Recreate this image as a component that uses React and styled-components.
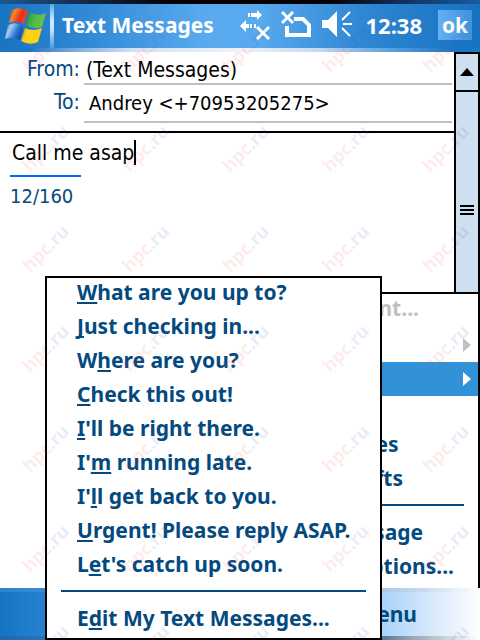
import React, { useState } from 'react';
import styled, { createGlobalStyle } from 'styled-components';

const templates = [
  ['', 'W', 'hat are you up to?'],
  ['', 'J', 'ust checking in...'],
  ['W', 'h', 'ere are you?'],
  ['', 'C', 'heck this out!'],
  ['', 'I', "'ll be right there."],
  ["I'", 'm', ' running late.'],
  ["I'", 'l', 'l get back to you.'],
  ['', 'U', 'rgent! Please reply ASAP.'],
  ['L', 'e', "t's catch up soon."],
];

function Flag() {
  return (
    <FlagSvg viewBox="4 4 44 44" aria-hidden="true">
      <defs>
        <linearGradient id="red" x1="0" y1="0" x2="1" y2="0.4">
          <stop offset="0" stopColor="#b8321c" />
          <stop offset="0.35" stopColor="#f4872c" />
          <stop offset="0.7" stopColor="#e2301a" />
          <stop offset="1" stopColor="#e8492a" />
        </linearGradient>
        <linearGradient id="green" x1="0" y1="0" x2="1" y2="0.3">
          <stop offset="0" stopColor="#1f8a35" />
          <stop offset="0.5" stopColor="#52b848" />
          <stop offset="1" stopColor="#6cc04a" />
        </linearGradient>
        <linearGradient id="blue" x1="0" y1="0" x2="1" y2="0.5">
          <stop offset="0" stopColor="#1c5cb4" />
          <stop offset="0.35" stopColor="#a4cdf6" />
          <stop offset="0.7" stopColor="#2f78d0" />
          <stop offset="1" stopColor="#174c9c" />
        </linearGradient>
        <linearGradient id="yellow" x1="0" y1="0" x2="1" y2="0.3">
          <stop offset="0" stopColor="#c88a12" />
          <stop offset="0.35" stopColor="#fbd21c" />
          <stop offset="1" stopColor="#ffcf10" />
        </linearGradient>
      </defs>
      <path fill="url(#red)" d="M12 10Q20 6 28 11L24 24Q17 20 9 23Z" />
      <path fill="url(#green)" d="M30 12Q37 17 46 13L42 27Q34 30 26 25Z" />
      <path fill="url(#blue)" d="M8 25Q16 21 23 26L20 40Q13 36 5 39Z" />
      <path fill="url(#yellow)" d="M25 28Q33 32 42 28L38 42Q30 46 21 41Z" />
    </FlagSvg>
  );
}

function Connectivity() {
  return (
    <StatusIcon viewBox="0 0 31 30" role="img" aria-label="Connectivity">
      <path d="M8 3h2v4H8zM11 3h6V0l5 5-5 5V7h-6z" />
      <path d="M0 16l6-6v4h3v4H6v4zM10 14h2v4h-2zM14 14h2v4h-2z" />
      <path d="M17 17l12 12M29 17L17 29" stroke="#fff" strokeWidth="3" />
    </StatusIcon>
  );
}

function Signal() {
  return (
    <StatusIcon viewBox="0 -1 31 30" role="img" aria-label="Phone off">
      <path d="M1 1l11 11M12 1L1 12" stroke="#fff" strokeWidth="3" />
      <path d="M13 8h9l6 6v10H6V15" fill="none" stroke="#fff" strokeWidth="4" />
    </StatusIcon>
  );
}

function Speaker() {
  return (
    <StatusIcon viewBox="0 -1 31 30" role="img" aria-label="Volume">
      <path d="M0 9h6l9-9v26l-9-9H0z" />
      <path d="M20 9l8-8M21 13h9M20 17l8 8" stroke="#fff" strokeWidth="2" />
    </StatusIcon>
  );
}

function Watermark() {
  return (
    <WatermarkSvg aria-hidden="true">
      <defs>
        <pattern id="mark" width="100" height="100" patternUnits="userSpaceOnUse">
          <text transform="translate(30 73) rotate(-45)">
            <tspan fill="#f04040">hpc</tspan>
            <tspan fill="#3048b0">.ru</tspan>
          </text>
        </pattern>
      </defs>
      <rect width="100%" height="100%" fill="url(#mark)" />
    </WatermarkSvg>
  );
}

export default function App() {
  const [message, setMessage] = useState('Call me asap');

  return (
    <Screen>
      <GlobalStyle />
      <TitleBar>
        <Flag />
        <Divider />
        <Title>Text Messages</Title>
        <Status>
          <Connectivity />
          <Signal />
          <Speaker />
          <Clock>12:38</Clock>
          <OkButton type="button">ok</OkButton>
        </Status>
      </TitleBar>

      <Body>
        <Compose>
          <Fields>
            <Label htmlFor="from">From:</Label>
            <Field id="from" defaultValue="(Text Messages)" />
            <Label htmlFor="to">To:</Label>
            <Field id="to" $number defaultValue="Andrey <+70953205275>" />
          </Fields>
          <Editor>
            <MessageLine>
              <Message
                aria-label="Message"
                rows={1}
                value={message}
                onChange={(e) => setMessage(e.target.value)}
              />
              <Caret />
            </MessageLine>
            <Counter>{message.length}/160</Counter>
          </Editor>
        </Compose>
        <Scrollbar>
          <ScrollUp type="button" aria-label="Scroll up">
            <svg width="14" height="8" viewBox="0 0 14 8">
              <path d="M7 0l7 8H0z" />
            </svg>
          </ScrollUp>
          <Thumb>
            <Grip />
            <Grip />
            <Grip />
          </Thumb>
          <Track />
        </Scrollbar>
      </Body>

      <SoftKeys>
        <SoftKey type="button">Menu</SoftKey>
      </SoftKeys>

      <MainMenu role="menu">
        <Item role="menuitem" disabled>Add Recipient...</Item>
        <Item role="menuitem" disabled>
          Insert
          <Arrow viewBox="0 0 8 14"><path d="M0 0l8 7-8 7z" /></Arrow>
        </Item>
        <Item role="menuitem" $active>
          My Text
          <Arrow viewBox="0 0 8 14"><path d="M0 0l8 7-8 7z" /></Arrow>
        </Item>
        <Item role="menuitem">Spelling</Item>
        <Item role="menuitem">Check Names</Item>
        <Item role="menuitem">Save to Drafts</Item>
        <Separator />
        <Item role="menuitem">Cancel Message</Item>
        <Item role="menuitem">Message Options...</Item>
      </MainMenu>

      <TextMenu role="menu">
        {templates.map(([before, key, after]) => (
          <Item role="menuitem" key={after}>
            {before}
            <u>{key}</u>
            {after}
          </Item>
        ))}
        <Separator />
        <Item role="menuitem">
          E<u>d</u>it My Text Messages...
        </Item>
      </TextMenu>

      <Watermark />
    </Screen>
  );
}

const GlobalStyle = createGlobalStyle`
  * {
    box-sizing: border-box;
  }
  body {
    margin: 0;
    background: #fff;
  }
  button, input, textarea {
    margin: 0;
    padding: 0;
    border: 0;
    border-radius: 0;
    background: none;
    color: inherit;
    font: inherit;
    outline: none;
  }
`;

const Screen = styled.div`
  position: relative;
  display: flex;
  flex-direction: column;
  min-height: 100vh;
  overflow: hidden;
  color: #000;
  font: 21px/27px 'DejaVu Sans Condensed', 'DejaVu Sans', Tahoma, sans-serif;
`;

const TitleBar = styled.header`
  display: flex;
  align-items: center;
  height: 52px;
  padding: 4px 8px 4px 4px;
  color: #fff;
  font: bold 21px/28px 'Noto Sans', sans-serif;
  background:
    linear-gradient(90deg, #1b5a94, #16335c 14%, #000 36%, #000 68%, #12366a 86%, #1a5c9c) top / 100% 4px no-repeat,
    linear-gradient(90deg, #1c76c4 6%, #8fb8e6 18%, #d4e2f4 28%, #eef3fb 50%, #c4daf2 66%, #64a4e0 80%, #1b76c4 94%) bottom / 100% 4px no-repeat,
    linear-gradient(90deg, #1873c0, #348cd8 20%, #58a9ee 42%, #58a9ee 54%, #2f86d2 76%, #1672c0);
`;

const FlagSvg = styled.svg`
  width: 44px;
  height: 44px;
`;

const Divider = styled.span`
  width: 4px;
  height: 44px;
  margin: 0 8px 0 2px;
  background: linear-gradient(#5ca8e6, #d4ecff 40%, #c0e0fc 60%, #4c9ce0);
`;

const Title = styled.h1`
  margin: 0;
  padding-bottom: 2px;
  font: inherit;
  white-space: nowrap;
`;

const Status = styled.div`
  display: flex;
  align-items: center;
  gap: 10px;
  margin-left: auto;
  padding-bottom: 2px;
`;

const StatusIcon = styled.svg`
  width: 31px;
  height: 30px;
  fill: #fff;
`;

const Clock = styled.time`
  margin: 0 6px 0 2px;
  font-size: 22px;
`;

const OkButton = styled.button`
  width: 34px;
  height: 30px;
  background: linear-gradient(90deg, #66b0f4, #3f92dc);
`;

const Body = styled.main`
  display: flex;
  flex: 1;
`;

const Compose = styled.div`
  flex: 1;
  min-width: 0;
`;

const Fields = styled.div`
  display: grid;
  grid-template-columns: 80px 1fr;
  column-gap: 4px;
  padding: 0 2px 8px 0;
  border-bottom: 2px solid #000;
`;

const Label = styled.label`
  padding-top: 4px;
  color: #044a7f;
  text-align: right;
`;

const Field = styled.input`
  width: 100%;
  height: ${({ $number }) => ($number ? 38 : 33)}px;
  padding: ${({ $number }) => ($number ? '4px 5px 5px' : '4px 2px 0')};
  border-bottom: 2px solid #c0c0c0;
  font-size: ${({ $number }) => ($number ? 20 : 21)}px;
`;

const Editor = styled.div`
  padding: 7px 10px;
`;

const MessageLine = styled.div`
  display: flex;
  padding: 0 0 8px 2px;
`;

const Message = styled.textarea`
  field-sizing: content;
  height: 27px;
  resize: none;
  overflow: hidden;
`;

const Caret = styled.span`
  width: 2px;
  height: 25px;
  background: #000;
`;

const Counter = styled.div`
  width: 71px;
  padding-top: 6px;
  border-top: 2px solid #0064ff;
  color: #044a7f;
  font-size: 20px;
`;

const Scrollbar = styled.div`
  display: flex;
  flex-direction: column;
  width: 26px;
  border: solid #000;
  border-width: 2px 2px 0;
  background: #cedff0;
`;

const ScrollUp = styled.button`
  display: flex;
  align-items: center;
  justify-content: center;
  height: 38px;
  border-bottom: 2px solid #000;
`;

const Thumb = styled.div`
  display: flex;
  flex: 10;
  flex-direction: column;
  align-items: center;
  justify-content: center;
  gap: 2px;
  border-bottom: 2px solid #000;
`;

const Grip = styled.span`
  width: 14px;
  height: 2px;
  background: #000;
`;

const Track = styled.div`
  flex: 11;
`;

const SoftKeys = styled.footer`
  display: flex;
  align-items: center;
  justify-content: flex-end;
  height: 52px;
  padding-right: 63px;
  background:
    linear-gradient(90deg, #1f6aac, #2b72b4 10%, #4c6a88 78%, #98a8b8 86%, #fff) bottom / 100% 4px no-repeat,
    linear-gradient(90deg, #2d84cc, #3a8cd4 10%, #a4c6e6 78%, #c8daf0 88%, #fff) top / 100% 4px no-repeat,
    linear-gradient(90deg, #1674c2, #2783d2 10%, #a2d0f8 78%, #cfe4fb 88%, #fff);
`;

const SoftKey = styled.button`
  color: #044a7f;
  font: bold 21px/28px 'Noto Sans', sans-serif;
`;

const Menu = styled.div`
  position: absolute;
  display: flex;
  flex-direction: column;
  border: 2px solid #000;
  background: #fff;
`;

const MainMenu = styled(Menu)`
  right: 0;
  bottom: 52px;
  padding-bottom: 2px;
  border-bottom: 0;
`;

const TextMenu = styled(Menu)`
  right: 98px;
  bottom: 0;
  left: 45px;
`;

const itemColor = ({ $active, disabled }) => {
  if ($active) return '#fff';
  return disabled ? '#c0c0c0' : '#044a7f';
};

const Item = styled.button`
  display: flex;
  height: 34px;
  padding: 0 24px 6px 30px;
  background: ${({ $active }) => ($active ? '#3192d8' : 'none')};
  color: ${itemColor};
  font: bold 21px/28px 'Noto Sans', sans-serif;
  white-space: pre;
  u {
    text-decoration-thickness: 2px;
    text-decoration-skip-ink: none;
    text-underline-offset: 2px;
  }
`;

const Arrow = styled.svg`
  width: 8px;
  height: 14px;
  margin: 10px -17px 0 auto;
  fill: currentColor;
`;

const Separator = styled.hr`
  width: calc(100% - 28px);
  height: 2px;
  margin: 6px 14px 12px;
  border: 0;
  background: #044a7f;
`;

const WatermarkSvg = styled.svg`
  position: absolute;
  inset: 0;
  width: 100%;
  height: 100%;
  pointer-events: none;
  text {
    font: bold 18px 'Noto Sans', sans-serif;
    opacity: 0.1;
  }
`;
